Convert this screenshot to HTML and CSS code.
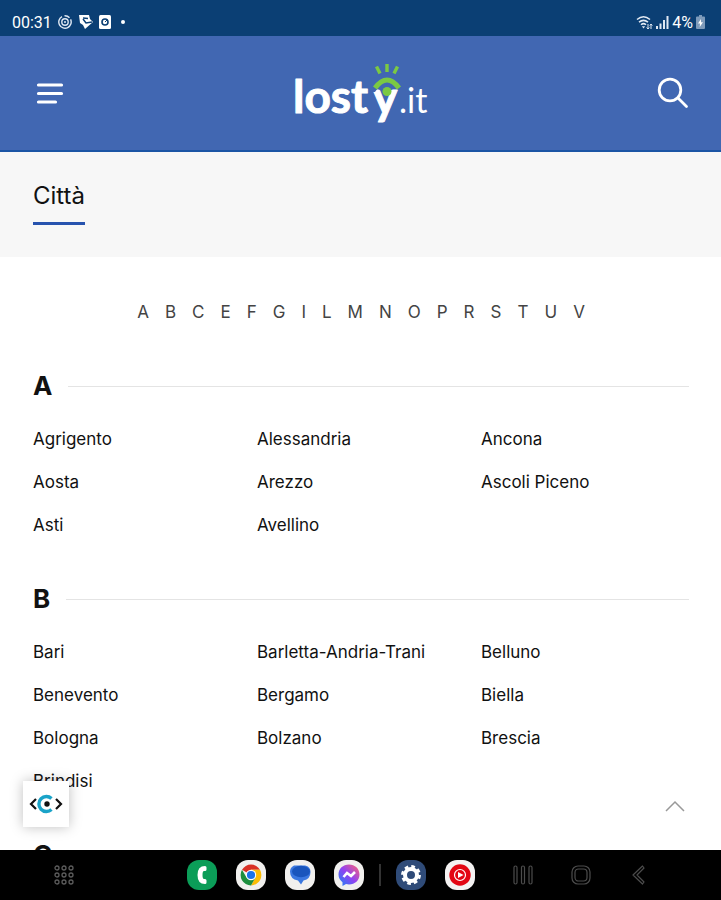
FILE: index.html
```html
<!DOCTYPE html>
<html lang="it">
<head>
    <meta charset="utf-8">
    <meta name="viewport" content="width=device-width, initial-scale=1">
    <title>Città - losty.it</title>
    <link rel="stylesheet" href="styles.css">
</head>
<body>
    <div class="status">
        <span>00:31</span>
        <svg width="14" height="14" viewBox="0 0 14 14" fill="none" stroke="#dfe8f3" stroke-width="1.4">
            <path d="M4 1.6A6.2 6.2 0 1 0 12.6 4.4"/>
            <path d="M6.5 .8A6.2 6.2 0 0 1 11.5 2.8"/>
            <circle cx="7" cy="7" r="3.2"/>
            <circle cx="7" cy="7" r="1" fill="#dfe8f3" stroke="none"/>
        </svg>
        <svg width="15" height="16" viewBox="0 0 15 16">
            <path d="M1 1h10l1 4 3 3-8 7-2-4-3-2z" fill="#fff"/>
            <path d="M5 4l5 .5M5 5l3 4 6-1" fill="none" stroke="#0b3f74" stroke-width="1.5"/>
        </svg>
        <svg width="12" height="14" viewBox="0 0 12 14">
            <rect width="12" height="14" rx="1.5" fill="#fff"/>
            <circle cx="6" cy="7" r="3" fill="none" stroke="#0b3f74" stroke-width="1.6"/>
            <path d="M6 7l2-2" stroke="#0b3f74"/>
        </svg>
        <span class="dot"></span>
        <div class="signal">
            <svg width="17" height="15" viewBox="0 0 17 15" fill="none" stroke="#e3eaf3" stroke-width="1.5">
                <path d="M1 4.5Q7.5-1 14 4.5M3 7.2Q7.5 3.5 12 7.2M5 9.700Q7.5 7.6 10 9.700"/>
                <path d="M7.5 13.5L5.8 11.3h3.4z" fill="#e3eaf3" stroke="none"/>
                <path d="M12 14V9M10.7 12.5L12 14l1.3-1.5M15 9v5M13.8 10.500L15 9l1.3 1.5" stroke-width="1"/>
            </svg>
            <svg width="13" height="13" viewBox="0 0 13 13" fill="#dfe8f3">
                <path d="M0 10h2v3H0zM3.5 7.5h2V13h-2zM7 4h2v9H7zM10.500 0h2v13h-2z"/>
            </svg>
            <span>4%</span>
            <svg width="9" height="14" viewBox="0 0 9 14">
                <path d="M3 0h3v1.5h2q1 0 1 1V13q0 1-1 1H1q-1 0-1-1V2.500q0-1 1-1h2z" fill="#7e9bbb"/>
                <path d="M5 4L2 8.500h2L3.700 12 7 7.300H5z" fill="#fff"/>
            </svg>
        </div>
    </div>

    <header class="header">
        <button class="icon-btn" aria-label="Menu">
            <svg width="28" height="24" viewBox="0 0 28 24" fill="none" stroke="#fff" stroke-width="3.2" stroke-linecap="round">
                <path d="M2.500 4h23M2.500 12.500h23M2.500 21h17"/>
            </svg>
        </button>
        <a class="logo" href="#" aria-label="losty.it">
            <svg width="138" height="66" viewBox="0 0 138 66">
                <text class="logo-main" x="0" y="53">lost</text>
                <text class="logo-main" x="80" y="54">y</text>
                <text class="logo-tld" x="106" y="53">.it</text>
                <!-- eye on top of the y -->
                <path d="M76 32V22Q94 4 112 22v6Q94 12 82 32z" fill="#4167b2"/>
                <g fill="none" stroke="#7bc943">
                    <path d="M82 28Q94 12 106 28" stroke-width="5"/>
                    <path d="M83.500 6.500l3.500 7M94 4v8M104.500 6.500l-3.500 7" stroke-width="3.400"/>
                </g>
                <circle cx="94" cy="31.500" r="4.500" fill="#7bc943"/>
            </svg>
        </a>
        <button class="icon-btn" aria-label="Cerca">
            <svg width="32" height="32" viewBox="0 0 32 32" fill="none" stroke="#fff" stroke-width="2.8" stroke-linecap="round">
                <circle cx="13" cy="13" r="10.800"/>
                <path d="M21 21l8.500 8.500"/>
            </svg>
        </button>
    </header>

    <div class="title-bar">
        <h1>Città</h1>
    </div>

    <main class="content">
        <nav class="letters">
            <a href="#A">A</a><a href="#B">B</a><a href="#C">C</a><a href="#E">E</a><a href="#F">F</a><a href="#G">G</a><a href="#I">I</a><a href="#L">L</a><a href="#M">M</a><a href="#N">N</a><a href="#O">O</a><a href="#P">P</a><a href="#R">R</a><a href="#S">S</a><a href="#T">T</a><a href="#U">U</a><a href="#V">V</a>
        </nav>

        <section class="group">
            <h2 id="A">A</h2>
            <ul>
                <li><a href="#">Agrigento</a></li>
                <li><a href="#">Alessandria</a></li>
                <li><a href="#">Ancona</a></li>
                <li><a href="#">Aosta</a></li>
                <li><a href="#">Arezzo</a></li>
                <li><a href="#">Ascoli Piceno</a></li>
                <li><a href="#">Asti</a></li>
                <li><a href="#">Avellino</a></li>
            </ul>
        </section>

        <section class="group">
            <h2 id="B">B</h2>
            <ul>
                <li><a href="#">Bari</a></li>
                <li><a href="#">Barletta-Andria-Trani</a></li>
                <li><a href="#">Belluno</a></li>
                <li><a href="#">Benevento</a></li>
                <li><a href="#">Bergamo</a></li>
                <li><a href="#">Biella</a></li>
                <li><a href="#">Bologna</a></li>
                <li><a href="#">Bolzano</a></li>
                <li><a href="#">Brescia</a></li>
                <li><a href="#">Brindisi</a></li>
            </ul>
        </section>

        <section class="group">
            <h2 id="C">C</h2>
        </section>

        <button class="access" aria-label="Accessibilità">
            <svg width="34" height="20" viewBox="0 0 34 20" fill="none">
                <path d="M7 5L2 10l5 5M27 5l5 5-5 5" stroke="#111" stroke-width="2.2"/>
                <path d="M22.500 4.500A7.500 7.500 0 1 0 22.500 15.500" stroke="#1aa3c8" stroke-width="3.400"/>
                <circle cx="18" cy="10" r="2.700" fill="#111"/>
            </svg>
        </button>
        <button class="to-top" aria-label="Torna su">
            <svg width="20" height="12" viewBox="0 0 20 12" fill="none" stroke="#999" stroke-width="1.5">
                <path d="M1 11l9-9 9 9"/>
            </svg>
        </button>
    </main>

    <footer class="navbar">
        <button class="nav-apps" aria-label="App">
            <svg width="20" height="20" viewBox="0 0 20 20" fill="none" stroke="#5c5c5c" stroke-width="1.3">
                <circle cx="3" cy="3" r="2"/><circle cx="10" cy="3" r="2"/><circle cx="17" cy="3" r="2"/>
                <circle cx="3" cy="10" r="2"/><circle cx="10" cy="10" r="2"/><circle cx="17" cy="10" r="2"/>
                <circle cx="3" cy="17" r="2"/><circle cx="10" cy="17" r="2"/><circle cx="17" cy="17" r="2"/>
            </svg>
        </button>
        <div class="dock">
            <button aria-label="Telefono">
                <svg width="30" height="30" viewBox="0 0 30 30">
                    <rect width="30" height="30" rx="12" fill="#0b9d58"/>
                    <path d="M18 6q1.500 0 1.500 1.500v2q0 1.500-1.500 1.500h-1q-1.500 0-1.500 4t1.500 4h1q1.500 0 1.500 1.500v2q0 1.500-1.500 1.500-7.500 0-7.500-9t7.500-9z" fill="#fff"/>
                </svg>
            </button>
            <button aria-label="Chrome">
                <svg width="30" height="30" viewBox="0 0 30 30">
                    <rect width="30" height="30" rx="12" fill="#f1f0ee"/>
                    <path d="M15 15L6 9.800A10.400 10.400 0 0 1 24 9.800H15z" fill="#d93025"/>
                    <path d="M15 9.800H24A10.400 10.400 0 0 1 15 25.400L19.500 17.600z" fill="#fbbc04"/>
                    <path d="M15 15l4.500 2.600L15 25.400A10.400 10.400 0 0 1 6 9.800L10.500 17.600z" fill="#1e8e3e"/>
                    <circle cx="15" cy="15" r="5.200" fill="#fff"/>
                    <circle cx="15" cy="15" r="4.100" fill="#1a73e8"/>
                </svg>
            </button>
            <button aria-label="Messaggi">
                <svg width="30" height="30" viewBox="0 0 30 30">
                    <rect width="30" height="30" rx="12" fill="#f1f0ee"/>
                    <path d="M9 5.500h11q5.500 1 5.500 6.500 0 7-7 8.500l-2.500 4-3-4Q5 19 5 11.500q0-4 4-6z" fill="#3b78e0"/>
                    <ellipse cx="16" cy="11.500" rx="9" ry="5.800" fill="#1955bd"/>
                </svg>
            </button>
            <button aria-label="Messenger">
                <svg width="30" height="30" viewBox="0 0 30 30">
                    <defs>
                        <linearGradient id="msg" x1="0" y1="1" x2="1" y2="0">
                            <stop offset="0" stop-color="#1686f5"/>
                            <stop offset=".5" stop-color="#9242f2"/>
                            <stop offset="1" stop-color="#ff6470"/>
                        </linearGradient>
                    </defs>
                    <rect width="30" height="30" rx="12" fill="#f1f0ee"/>
                    <path d="M15 4.500c6 0 10.500 4.300 10.500 10S21 24.500 15 24.500q-1.500 0-3-.4L8.500 26v-3.800Q4.500 19 4.500 14.500c0-5.700 4.500-10 10.500-10z" fill="url(#msg)"/>
                    <path d="M9.500 17l3.500-4 4 3 4-4" fill="none" stroke="#fff" stroke-width="2.600"/>
                </svg>
            </button>
            <span class="divider"></span>
            <button aria-label="Impostazioni">
                <svg width="30" height="30" viewBox="0 0 30 30">
                    <rect width="30" height="30" rx="12" fill="#2f4b78"/>
                    <circle cx="15" cy="15" r="8.400" fill="none" stroke="#fff" stroke-width="3" stroke-dasharray="3.600 3"/>
                    <circle cx="15" cy="15" r="6" fill="none" stroke="#fff" stroke-width="4"/>
                </svg>
            </button>
            <button aria-label="YouTube Music">
                <svg width="30" height="30" viewBox="0 0 30 30">
                    <rect width="30" height="30" rx="12" fill="#f4f2f2"/>
                    <circle cx="15" cy="15" r="10.700" fill="#e30613"/>
                    <circle cx="15" cy="15" r="5.500" fill="none" stroke="#fff" stroke-width="1.200"/>
                    <path d="M13 12l5.500 3-5.500 3z" fill="#fff"/>
                </svg>
            </button>
        </div>
        <div class="keys">
            <button aria-label="Recenti">
                <svg width="20" height="20" viewBox="0 0 20 20" fill="none" stroke="#4c4c4c" stroke-width="1.2">
                    <rect x="1" y="1" width="3" height="18" rx="1.5"/>
                    <rect x="8.500" y="1" width="3" height="18" rx="1.5"/>
                    <rect x="16" y="1" width="3" height="18" rx="1.5"/>
                </svg>
            </button>
            <button aria-label="Home">
                <svg width="20" height="20" viewBox="0 0 20 20" fill="none" stroke="#4c4c4c" stroke-width="1.2">
                    <rect x="1" y="1" width="18" height="18" rx="6"/>
                    <rect x="4" y="4" width="12" height="12" rx="3.500"/>
                </svg>
            </button>
            <button aria-label="Indietro">
                <svg width="20" height="20" viewBox="0 0 20 20" fill="none" stroke="#4c4c4c" stroke-width="1.2" stroke-linejoin="round">
                    <path d="M13.500 1L4 10l9.500 9 1.500-2-7-7 7-7z"/>
                </svg>
            </button>
        </div>
    </footer>
</body>
</html>
```
FILE: styles.css
```css
* { box-sizing: border-box; }
body { font-family: Inter, "Liberation Sans", sans-serif; margin: 0; height: 100vh; display: flex; flex-direction: column; background: #fff; color: #111; }
a { color: inherit; text-decoration: none; }
button { border: 0; padding: 0; background: none; cursor: pointer; }
svg { display: block; }
h1, h2, ul { margin: 0; padding: 0; font-weight: normal; }

.status { flex: none; display: flex; align-items: center; gap: 6px; height: 36px; padding: 8px 16px 0 12px; background: #0b3f74; color: #fff; font-family: Roboto, sans-serif; font-size: 16px; }
.dot { width: 4px; height: 4px; margin-left: 4px; border-radius: 50%; background: #fff; }
.signal { display: flex; align-items: center; gap: 3px; margin-left: auto; }

.header { flex: none; display: flex; align-items: center; justify-content: space-between; height: 116px; padding: 0 30px 0 32px; background: #4167b2; border-bottom: 2px solid #1b55a5; }
.icon-btn { width: 36px; height: 36px; display: flex; align-items: center; justify-content: center; }
.logo-main { font-family: Lato, sans-serif; font-size: 46px; font-weight: 700; fill: #fff; stroke: #fff; stroke-width: 1px; stroke-linejoin: round; }
.logo-tld { font-family: Lato, sans-serif; font-size: 34px; fill: #fff; }

.title-bar { flex: none; height: 105px; padding: 28px 33px; background: #f7f7f7; }
.title-bar h1 { display: inline-block; padding-bottom: 10px; border-bottom: 3px solid #2753ae; font-size: 24px; line-height: 32px; }

.content { flex: 1; min-height: 0; position: relative; overflow: hidden; padding: 40px 32px 0 33px; }
.letters { display: flex; justify-content: center; gap: 16px; margin-bottom: 43px; font-size: 17px; line-height: 30px; color: #444; }

.group { margin-bottom: 36px; }
.group h2 { display: flex; align-items: center; gap: 16px; margin-bottom: 16px; font-size: 26px; font-weight: 700; line-height: 32px; }
.group h2::after { content: ""; flex: 1; height: 1px; background: #e4e4e4; }
.group ul { display: grid; grid-template-columns: repeat(3, 1fr); column-gap: 16px; list-style: none; font-size: 17px; line-height: 43px; }

.access { position: absolute; left: 23px; bottom: 23px; width: 46px; height: 46px; display: flex; align-items: center; justify-content: center; background: #fff; box-shadow: 0 0 12px rgba(0,0,0,0.25); }
.to-top { position: absolute; right: 36px; bottom: 38px; }

.navbar { flex: none; display: flex; align-items: center; height: 50px; padding: 0 72px 0 54px; background: #000; }
.dock { display: flex; align-items: center; gap: 19px; margin: 0 38px 0 auto; }
.divider { width: 2px; height: 22px; margin: 0 -4px; background: #333; }
.keys { display: flex; gap: 38px; }
```
